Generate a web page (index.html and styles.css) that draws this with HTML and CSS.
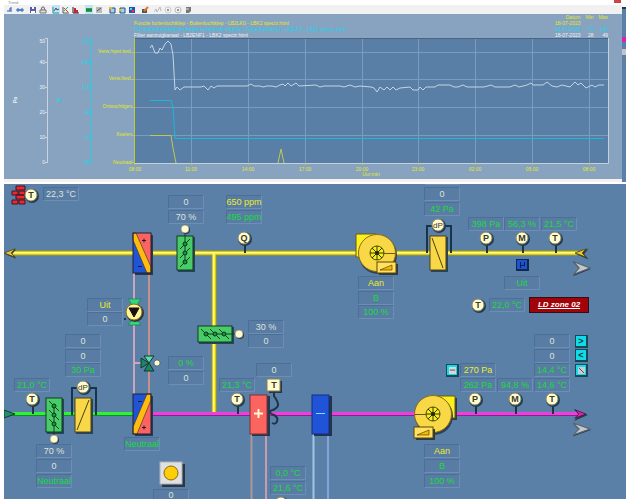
FILE: index.html
```html
<!DOCTYPE html>
<html lang="nl">
<head>
<meta charset="utf-8">
<title>LBK2</title>
<link rel="stylesheet" href="styles.css">
</head>
<body>
<section class="trend-row">
  <div class="trend">
    <header class="titlebar"><span>Trend</span><button class="close" aria-label="Sluiten"></button></header>
    <div class="toolbar">
      <button aria-label="Begin"><svg viewBox="0 0 8 8"><path d="M1 5h3V2M5 1v5" stroke="#2458b8"/></svg></button>
      <button aria-label="Zoeken"><svg viewBox="0 0 8 8"><path d="M1 5V3h2v2zM5 5V3h2v2zM3 4h2" stroke="#2458b8"/></svg></button>
      <button class="gap" aria-label="Opslaan"><svg viewBox="0 0 8 8"><path d="M1 1h6v6H1z" fill="#5560a8"/><path d="M3 1h2v2H3zM2 5h4v2H2z" fill="#fff"/></svg></button>
      <button aria-label="Afdrukken"><svg viewBox="0 0 8 8"><path d="M1 4h6v3H1zM2 4l1-3h2l1 3" stroke="#777" fill="#ddd"/></svg></button>
      <button class="gap on" aria-label="Grafiek"><svg viewBox="0 0 8 8"><path d="M1 1v6h6" stroke="#1c9c9c"/><path d="M2 5l2-3 1 2 2-1" stroke="#448"/></svg></button>
      <button aria-label="Lijnen"><svg viewBox="0 0 8 8"><path d="M1 1v6h6" stroke="#555"/><path d="M2 2l4 4" stroke="#d33"/><path d="M2 5l4-4" stroke="#2a4"/></svg></button>
      <button aria-label="Staven"><svg viewBox="0 0 8 8"><path d="M1 1v6h6" stroke="#224"/><path d="M3 7V2M5 7V4" stroke="#c23" stroke-width="2"/></svg></button>
      <button class="gap on" aria-label="Tabel"><svg viewBox="0 0 8 8"><path d="M1 2h6v4H1z" fill="#27a747"/><path d="M1 4h6" stroke="#165"/></svg></button>
      <button aria-label="Raster"><svg viewBox="0 0 8 8"><path d="M1 1h6v6H1z" fill="#bbb"/><path d="M2 5l4-3" stroke="#555"/></svg></button>
      <button class="gap" aria-label="Periode"><svg viewBox="0 0 8 8"><path d="M2 2h5v5H2z" fill="#9cd4f4" stroke="#347"/><path d="M1 1h3v2H1z" fill="#e8b830"/></svg></button>
      <button aria-label="Verschuiven"><svg viewBox="0 0 8 8"><path d="M2 2h5v5H2z" fill="#9cd4f4" stroke="#258"/><path d="M1 4h3" stroke="#e8b830" stroke-width="2"/></svg></button>
      <button aria-label="Kleuren"><svg viewBox="0 0 8 8"><path d="M1 1h6v6H1z" fill="#2a50b0"/><path d="M2 2h2v2H2z" fill="#4de"/><path d="M4 4h2v2H4z" fill="#e33"/></svg></button>
      <button class="gap" aria-label="Bewerken"><svg viewBox="0 0 8 8"><path d="M1 3h5v4H1z" fill="#555"/><path d="M3 5l4-4" stroke="#d73" stroke-width="2"/></svg></button>
      <button class="gap" aria-label="Volgen"><svg viewBox="0 0 8 8"><path d="M0 6l2-3 1 3 3-5 1 4" stroke="#bbb"/></svg></button>
      <button aria-label="Omhoog"><svg viewBox="0 0 8 8"><circle cx="4" cy="4" r="3" stroke="#ccc"/><path d="M3 4h2" stroke="#444"/></svg></button>
      <button aria-label="Omlaag"><svg viewBox="0 0 8 8"><circle cx="4" cy="4" r="3" stroke="#bbb"/><path d="M3 4h2" stroke="#444"/></svg></button>
      <button aria-label="Export"><svg viewBox="0 0 8 8"><path d="M2 1h5v4L5 7H2z" fill="#777"/><path d="M2 3h3" stroke="#ddd"/></svg></button>
    </div>
    <div class="legend">
      <ul>
        <li class="c-yellow">Functie buitenluchtklep - Buitenluchtklep - LB2LK0 - LBK2 speciz.html</li>
        <li class="c-cyan">PID buitenluchtklep als hoger berekende waarde - Buitenluchtklep - LB2LK0 - LBK2 speciz.html</li>
        <li class="c-white">Filter aanzuigkanaal - LB2ENF1 - LBK2 speciz.html</li>
      </ul>
      <table>
        <tr class="c-yellow"><th>Datum</th><th>Min</th><th>Max</th></tr>
        <tr class="c-yellow"><td>18-07-2023</td><td></td><td></td></tr>
        <tr class="c-cyan"><td>18-07-2023</td><td>70</td><td>100</td></tr>
        <tr class="c-white"><td>18-07-2023</td><td>28</td><td>49</td></tr>
      </table>
    </div>
    <svg class="chart" viewBox="4 38 618 141">
      <rect x="135" y="38" width="473" height="125" fill="#5a7fa7"/>
      <path class="grid" d="M191.500 38V163M248.500 38V163M305.500 38V163M362.500 38V163M418.500 38V163M475.500 38V163M532.500 38V163M589.500 38V163M135 52.500H608M135 79.500H608M135 107.500H608M135 135.500H608"/>
      <path d="M135 38.500H608" stroke="#4c6480"/>
      <path d="M135 163.500H608.500V38" stroke="#c4d0dc" fill="none"/>
      <path d="M134.500 38V165M132 52.500h3M132 79.500h3M132 107.500h3M132 135.500h3M132 162.500h3M191.500 163v2M248.500 163v2M305.500 163v2M362.500 163v2M418.500 163v2M475.500 163v2M532.500 163v2M589.500 163v2" stroke="#c6cc2c"/>
      <path d="M47.500 38V163M45 38.500h3M45 62.500h3M45 87.500h3M45 112.500h3M45 137.500h3M45 162.500h3" stroke="#c8d4e0"/>
      <path d="M91.500 38V163M89 38.500h3M89 62.500h3M89 87.500h3M89 112.500h3M89 137.500h3M89 162.500h3" stroke="#30c8dc"/>
      <g class="tick end c-white"><text x="45" y="43">50</text><text x="45" y="64">40</text><text x="45" y="89">30</text><text x="45" y="114">20</text><text x="45" y="139">10</text><text x="45" y="164">0</text></g>
      <g class="tick end c-cyan"><text x="90" y="43">150</text><text x="90" y="64">130</text><text x="90" y="89">110</text><text x="90" y="114">90</text><text x="90" y="139">70</text><text x="90" y="164">50</text></g>
      <g class="tick end c-yellow"><text x="132" y="53">Verw./spei.bed.</text><text x="132" y="80">Verw./bed.</text><text x="132" y="108">Ontvochtigen</text><text x="132" y="136">Koelen</text><text x="132" y="164">Neutraal</text></g>
      <g class="tick mid c-yellow"><text x="135" y="171">08:00</text><text x="191" y="171">11:00</text><text x="248" y="171">14:00</text><text x="305" y="171">17:00</text><text x="362" y="171">20:00</text><text x="418" y="171">23:00</text><text x="475" y="171">02:00</text><text x="532" y="171">05:00</text><text x="589" y="171">08:00</text><text x="371" y="176">Uur:min</text></g>
      <text class="unit c-white" transform="translate(17 100) rotate(-90)">Pa</text>
      <text class="unit c-cyan" transform="translate(61 100) rotate(-90)">%</text>
      <polyline class="series" stroke="#c4d4e4" points="150,48 152,45 155,53 158,53 160,48 162,50 165,44 168,41 171,44 173,55 175,90 177,87 180,90 184,87 201,87 204,86 208,90 211,86 214,88 217,86 247,86 251,84 254,86 260,86 263,87 267,86 272,86 276,87 280,85 283,84 285,86 288,83 291,86 296,83 299,86 316,85 320,87 324,86 340,86 344,87 350,85 355,87 360,86 371,87 374,88 377,92 380,87 384,90 387,87 390,90 393,87 396,90 400,88 410,87 413,90 418,90 420,87 423,90 426,87 435,87 438,85 450,85 454,87 458,87 463,85 467,87 484,87 491,85 495,87 510,87 515,85 519,87 527,85 531,83 533,85 543,85 547,82 552,86 557,87 562,85 570,87 575,82 578,85 581,83 586,88 592,85 595,87 599,85 604,85"/>
      <polyline class="series" stroke="#1cb8d4" points="150,100.500 171,100.500 173,107 175,138.500 604,138.500"/>
      <polyline class="series" stroke="#c0c84c" points="150,135.500 171,135.500 173,148 176,163"/>
      <polyline class="series" stroke="#c0c84c" points="278,163 281,149 284,163"/>
    </svg>
  </div>
  <div class="behind"><i class="pipe-end"></i><i class="arrow-end"></i></div>
</section>

<main class="plant">
<svg viewBox="4 184 622 315">
  <defs>
    <g id="box"><rect x="-17.500" y="-6.500" width="35" height="13" fill="#587ca4"/><path d="M-17.500 6.500V-6.500H17.500" stroke="#4c6f97" fill="none"/><path d="M-17.500 6.500H17.500V-6.500" stroke="#6d8fb4" fill="none"/></g>
    <g id="ball"><circle cx="1" cy="1" r="7" fill="#223a50"/><circle r="6" fill="#fffbd0" stroke="#8a8a68"/></g>
    <g id="sensor"><path d="M1 6V15" stroke="#1d3348" stroke-width="2"/><use href="#ball"/></g>
    <g id="knob"><circle cx="1" cy="1" r="4" fill="#223a50"/><circle r="4" fill="#fffbd0" stroke="#77775c" stroke-width=".6"/></g>
    <g id="damper"><rect x="-8" y="-17" width="16" height="34" fill="#48cc68" stroke="#123c1c"/><path d="M0-20V10M-5-4L5-14M-5 5L5-5M-5 14L5 4" stroke="#143c20"/><g fill="#1d9440" stroke="#0c3418"><circle cy="-9" r="2"/><circle r="2"/><circle cy="9" r="2"/></g></g>
    <g id="filter"><path d="M-11 0V-27H13V0" fill="none" stroke="#18344c" stroke-width="2"/><rect x="-7" y="-16" width="17" height="35" fill="#28435c"/><rect x="-8" y="-17" width="16" height="34" fill="#f8d848" stroke="#4c4010"/></g>
    <g id="rotor"><circle cx="1" cy="2" r="19" fill="#2b4258"/><circle r="18.500" fill="#f9d848" stroke="#8c6c10"/><circle r="7" fill="#f4ee20" stroke="#4c4800"/><path d="M0-7V7M-7 0H7M-5-5L5 5M5-5L-5 5" stroke="#383400"/><circle r="2" fill="#252500"/></g>
    <g id="drive"><rect x="2" y="2" width="19" height="11" fill="#2b3848"/><rect width="19" height="11" fill="#ffe060" stroke="#5c4800"/><path d="M3 8H15V3z" fill="#f8b800" stroke="#5c4000" stroke-width=".7"/></g>
    <path id="dart" d="M0 0L-14-6L-9 0L-14 6z"/>
  </defs>
  <rect x="4" y="184" width="622" height="315" fill="#5b80a8"/>

  <!-- ducts -->
  <g fill="none"><path d="M12 253H578M214 253V412" stroke="#a79b12" stroke-width="5"/><path d="M12 253H578M214 253V412" stroke="#fff02c" stroke-width="3"/><path d="M12 252.500H578M213.500 253V412" stroke="#fff99c"/>
  <path d="M10 414H133" stroke="#138c24" stroke-width="4"/><path d="M10 413.500H133" stroke="#30f03c" stroke-width="3"/>
  <path d="M151 414H578" stroke="#8c208c" stroke-width="4"/><path d="M151 413.500H578" stroke="#ec40dc" stroke-width="3"/></g>
  <use href="#dart" transform="translate(5 254) scale(-.8 .8)" fill="#273a40"/><use href="#dart" transform="translate(4 253) scale(-.8 .7)" fill="#e8c840" stroke="#403c10"/>
  <use href="#dart" transform="translate(576 254) scale(-.9 .9)" fill="#273a40"/><use href="#dart" transform="translate(575 253) scale(-.8 .7)" fill="#f8cc28" stroke="#403c10"/>
  <use href="#dart" transform="translate(591 269) scale(1.300 1.200)" fill="#263c50"/><use href="#dart" transform="translate(590 268) scale(1.200 1.100)" fill="#c4c8cc" stroke="#59646c"/>
  <use href="#dart" transform="translate(591 430) scale(1.300 1.100)" fill="#263c50"/><use href="#dart" transform="translate(590 429) scale(1.200 1)" fill="#c4c8cc" stroke="#59646c"/>
  <use href="#dart" transform="translate(588 415)" fill="#263c50"/><use href="#dart" transform="translate(586 414) scale(.8 .7)" fill="#e020a8" stroke="#481040"/>
  <path d="M4 410L15 414L4 418z" fill="#229068" stroke="#123c30"/>

  <!-- water piping -->
  <path d="M134 273V394M134 363H142" stroke="#c9a4bc" stroke-width="2" fill="none"/><path d="M149 273V394" stroke="#c89088" stroke-width="2"/>
  <path d="M251.500 434V499" stroke="#ae9698" stroke-width="2"/><path d="M266 434V499" stroke="#c89cac" stroke-width="2"/>
  <path d="M313.500 434V499" stroke="#a4c4e4" stroke-width="2"/><path d="M328 434V499" stroke="#84a4d8" stroke-width="2"/>

  <!-- heat recovery coils -->
  <rect x="135" y="235" width="18" height="40" fill="#2a3950"/><path d="M133 233H151V273z" fill="#fc6464"/><path d="M133 233V273H151z" fill="#2054d8"/><path d="M133 233H136L151 267V273H147L133 240z" fill="#ffbc10" stroke="#4c3820" stroke-width=".7"/><rect x="133" y="233" width="18" height="40" fill="none" stroke="#202030"/><path d="M142 240.500h4M144 238.500v4M138 266.500h4" stroke="#281828"/>
  <rect x="135" y="396" width="18" height="40" fill="#2a3950"/><path d="M133 394H151L133 434z" fill="#2054d8"/><path d="M151 394V434H133z" fill="#fc6464"/><path d="M151 394H147L133 427V434H137L151 400z" fill="#ffbc10" stroke="#4c3820" stroke-width=".7"/><rect x="133" y="394" width="18" height="40" fill="none" stroke="#202030"/><path d="M142 427.500h4M144 425.500v4M138 401.500h4" stroke="#281828"/>

  <!-- dampers -->
  <path d="M178 237h17v35h-17zM47 399h17v35H47zM199 327h35v17h-35z" fill="#28435c"/>
  <use href="#damper" x="185" y="253"/><use href="#knob" x="185" y="229"/>
  <use href="#damper" transform="translate(54 415) scale(1 -1)"/><use href="#knob" x="54" y="439"/>
  <use href="#damper" transform="translate(215 334) rotate(90)"/><use href="#knob" x="239" y="334"/>

  <!-- filters -->
  <use href="#filter" x="438" y="253"/><path d="M432 238L443 268" stroke="#4c4010"/><use href="#ball" x="438" y="225"/>
  <use href="#filter" x="83" y="415"/><path d="M77 430L89 400" stroke="#4c4010"/><use href="#ball" x="83" y="387"/>

  <!-- fans -->
  <path d="M356 234H376V257H356z" fill="#fcf020" stroke="#665c08"/><use href="#rotor" x="377" y="253"/><path d="M384 253.500H395" stroke="#6c5810"/><use href="#drive" x="377" y="262"/>
  <path d="M438 398H457V420H438z" fill="#2b3c50"/><path d="M436 396H455V418H436z" fill="#fcf020" stroke="#665c08"/><use href="#rotor" x="433" y="414"/><path d="M415 414.500H426" stroke="#6c5810"/><use href="#drive" x="414" y="427"/>

  <!-- heater and cooler -->
  <rect x="252" y="396" width="18" height="40" fill="#28384c"/><rect x="250" y="395" width="17" height="39" fill="#fc6460" stroke="#783038"/><path d="M254 413.500h9M258.500 409v9" stroke="#fff8d0" stroke-width="2"/>
  <rect x="314" y="396" width="18" height="40" fill="#20344c"/><rect x="312" y="395" width="17" height="39" fill="#2054d8" stroke="#182c78"/><path d="M316 413.500h9" stroke="#8cd8f8"/>
  <path d="M274 391V396C279 403 280 407 273 410C268 411 270 414 274 415C280 418 277 426 272 423" fill="none" stroke="#1c3448" stroke-width="2"/>
  <rect x="269" y="381" width="13" height="12" fill="#243848"/><rect x="267" y="379" width="13" height="12" fill="#fffbd0" stroke="#8a8048"/>

  <!-- pump and mixing valve -->
  <path d="M128 299h13l-3 4v3h-7v-3zM128 325h13l-3-4v-3h-7v3z" fill="#30d878" stroke="#1c7048" stroke-width=".6"/><circle cx="135" cy="313" r="9" fill="#2b3440"/><circle cx="134" cy="312" r="8" fill="#fff49c" stroke="#8c7410"/><path d="M129 308H139L134 317z" fill="#181010" stroke="#181010"/><circle cx="125" cy="319" r="1" fill="#102030"/>
  <path d="M149 363L144 356H154z" fill="#60d8b0" stroke="#103830"/><path d="M149 363L144 371H154zM149 363L141 358V368z" fill="#188864" stroke="#103830"/><circle cx="157" cy="363" r="3" fill="#fffbd0" stroke="#344048" stroke-width=".6"/>

  <!-- outdoor wall -->
  <path d="M16 186h9v4h-9zM12 191h6v4h-6zM19 191h6v4h-6zM16 195h9v4h-9zM12 200h6v4h-6zM19 200h6v4h-6z" fill="#f42430" stroke="#381820"/>

  <!-- lamp -->
  <rect x="162" y="464" width="23" height="23" fill="#283848"/><rect x="160" y="462" width="22" height="22" fill="#e0e0e4" stroke="#b0b0b4"/><circle cx="171" cy="473" r="7" fill="#ffcc08" stroke="#866c10"/>

  <!-- humidifier status -->
  <rect x="516" y="259" width="13" height="12" fill="#14284c"/><rect x="517" y="260" width="10" height="9" fill="#1c54d0"/><path d="M520.500 262V268M524.500 262V266M520 265.500H524" stroke="#0c1c50"/>

  <!-- sensors -->
  <g><use href="#sensor" x="244" y="238"/><use href="#sensor" x="486" y="238"/><use href="#sensor" x="522" y="238"/><use href="#sensor" x="555" y="238"/><use href="#sensor" x="32" y="399"/><use href="#sensor" x="237" y="399"/><use href="#sensor" x="475" y="399"/><use href="#sensor" x="515" y="399"/><use href="#sensor" x="552" y="399"/><use href="#ball" x="31" y="195"/><use href="#ball" x="478" y="305"/><use href="#ball" x="281" y="503"/></g>
  <g class="tag"><text x="244" y="241">Q</text><text x="486" y="241">P</text><text x="522" y="241">M</text><text x="555" y="241">T</text><text x="32" y="402">T</text><text x="237" y="402">T</text><text x="475" y="402">P</text><text x="515" y="402">M</text><text x="552" y="402">T</text><text x="31" y="198">T</text><text x="478" y="308">T</text><text x="274" y="388">T</text><text class="thin" x="438" y="228">dP</text><text class="thin" x="83" y="390">dP</text></g>

  <!-- readouts -->
  <g>
    <use href="#box" x="61" y="194"/><use href="#box" x="186" y="202"/><use href="#box" x="186" y="217"/><use href="#box" x="244" y="202"/><use href="#box" x="244" y="217"/><use href="#box" x="105" y="305"/><use href="#box" x="105" y="319"/><use href="#box" x="266" y="327"/><use href="#box" x="266" y="341"/>
    <use href="#box" x="442" y="178"/><use href="#box" x="442" y="194"/><use href="#box" x="442" y="209"/><use href="#box" x="376" y="283"/><use href="#box" x="376" y="298"/><use href="#box" x="376" y="312"/><use href="#box" x="486" y="224"/><use href="#box" x="522" y="224"/><use href="#box" x="559" y="224"/><use href="#box" x="522" y="283"/><use href="#box" x="507" y="305"/>
    <use href="#box" x="83" y="341"/><use href="#box" x="83" y="356"/><use href="#box" x="83" y="370"/><use href="#box" x="32" y="385"/><use href="#box" x="54" y="451"/><use href="#box" x="54" y="466"/><use href="#box" x="54" y="481"/><use href="#box" x="142" y="444"/><use href="#box" x="171" y="496"/>
    <use href="#box" x="186" y="363"/><use href="#box" x="186" y="378"/><use href="#box" x="237" y="385"/><use href="#box" x="274" y="370"/><use href="#box" x="288" y="473"/><use href="#box" x="288" y="488"/>
    <use href="#box" x="552" y="341"/><use href="#box" x="552" y="356"/><use href="#box" x="552" y="370"/><use href="#box" x="552" y="385"/><use href="#box" x="515" y="385"/><use href="#box" x="478" y="385"/><use href="#box" x="478" y="370"/><use href="#box" x="442" y="451"/><use href="#box" x="442" y="466"/><use href="#box" x="442" y="481"/>
  </g>
  <g class="val set"><text x="61" y="197">22,3 °C</text><text x="186" y="205">0</text><text x="186" y="220">70 %</text><text x="105" y="322">0</text><text x="266" y="330">30 %</text><text x="266" y="344">0</text><text x="442" y="197">0</text><text x="83" y="344">0</text><text x="83" y="359">0</text><text x="54" y="454">70 %</text><text x="54" y="469">0</text><text x="171" y="498">0</text><text x="186" y="381">0</text><text x="274" y="373">0</text><text x="552" y="344">0</text><text x="552" y="359">0</text></g>
  <g class="val warn"><text x="244" y="205">650 ppm</text><text x="105" y="308">Uit</text><text x="376" y="286">Aan</text><text x="442" y="454">Aan</text><text x="478" y="373">270 Pa</text></g>
  <g class="val live"><text x="244" y="220">495 ppm</text><text x="442" y="212">42 Pa</text><text x="376" y="301">B</text><text x="376" y="315">100 %</text><text x="486" y="227">398 Pa</text><text x="522" y="227">56,3 %</text><text x="559" y="227">21,5 °C</text><text x="522" y="286">Uit</text><text x="507" y="308">22,0 °C</text><text x="83" y="373">30 Pa</text><text x="32" y="388">21,0 °C</text><text x="54" y="484">Neutraal</text><text x="142" y="447">Neutraal</text><text x="186" y="366">0 %</text><text x="237" y="388">21,3 °C</text><text x="288" y="476">0,0 °C</text><text x="288" y="491">21,6 °C</text><text x="552" y="373">14,4 °C</text><text x="552" y="388">14,6 °C</text><text x="515" y="388">94,8 %</text><text x="478" y="388">262 Pa</text><text x="442" y="469">B</text><text x="442" y="484">100 %</text></g>

  <!-- controls -->
  <foreignObject x="529" y="297" width="60" height="16"><a class="zone" href="#zone02">LD zone 02</a></foreignObject>
  <foreignObject x="575" y="335" width="14" height="14"><button class="key">&gt;</button></foreignObject>
  <foreignObject x="575" y="349" width="14" height="14"><button class="key">&lt;</button></foreignObject>
  <foreignObject x="575" y="364" width="14" height="14"><button class="key" aria-label="Stooklijn"><svg viewBox="0 0 8 8"><path d="M0 0h8v8H0z" fill="#c8ccd0"/><path d="M1 1l6 6" stroke="#384858"/></svg></button></foreignObject>
  <foreignObject x="446" y="364" width="14" height="14"><button class="key" aria-label="Instelling"><svg viewBox="0 0 8 8"><path d="M0 0h8v8H0z" fill="#d4d8dc"/><path d="M1 3.500h6" stroke="#384858"/></svg></button></foreignObject>
</svg>
</main>
</body>
</html>
```

FILE: styles.css
```css
* { box-sizing: border-box; }

body {
  margin: 0;
  background: #fff;
  font-family: "Liberation Sans", Arial, sans-serif;
}

svg { display: block; }
button { padding: 0; border: 0; background: none; font: inherit; }

.trend-row { display: flex; padding-left: 4px; }
.trend { flex: 1; min-width: 0; border-bottom: 3px solid #f4f1ef; margin-bottom: 2px; }

.titlebar {
  display: flex;
  justify-content: space-between;
  align-items: flex-start;
  height: 5px;
  padding-left: 4px;
  font-size: 4px;
  line-height: 5px;
  color: #888;
}
.close { width: 7px; height: 3px; margin-right: 1px; background: #cc4444; }

.toolbar { display: flex; gap: 2px; height: 9px; padding-left: 2px; background: #f1f1f1; }
.toolbar button { width: 8px; height: 9px; }
.toolbar .gap { margin-left: 3px; }
.toolbar .on { background: #c4e4f0; }
.toolbar svg { width: 8px; height: 8px; fill: none; }

.legend {
  display: flex;
  justify-content: space-between;
  align-items: flex-end;
  height: 24px;
  padding: 0 14px 0 130px;
  background: #87a3c0;
  font-size: 5px;
  line-height: 6px;
}
.legend ul { margin: 0; padding: 0; list-style: none; white-space: nowrap; }
.legend table { border-collapse: collapse; }
.legend th, .legend td { padding: 0 0 0 5px; font-weight: normal; text-align: right; line-height: 6px; }

.c-yellow { color: #e4e820; fill: #e4e820; }
.c-cyan { color: #10d8ee; fill: #10d8ee; }
.c-white { color: #eef2f6; fill: #eef2f6; }

.chart { width: 100%; height: auto; background: #87a3c0; }
.grid { stroke: #7c9cbf; fill: none; }
.tick { font-size: 5px; }
.end { text-anchor: end; }
.mid { text-anchor: middle; }
.unit { font-size: 5px; font-weight: bold; text-anchor: middle; }
.series { fill: none; stroke-width: 1; }

.behind {
  display: flex;
  flex-direction: column;
  gap: 7px;
  width: 4px;
  margin: 7px 0 2px;
  padding-top: 28px;
  border-top: 2px solid #26384c;
  background: #5b80a8;
}
.pipe-end { height: 5px; background: #dc20b0; }
.arrow-end { height: 6px; background: #c4c4c8; }

.plant { padding-left: 4px; }
.plant > svg { width: 100%; height: auto; }

.tag { font-size: 9px; font-weight: bold; text-anchor: middle; fill: #3a3828; }
.thin { font-size: 8px; font-weight: normal; }
.val { font-size: 9px; text-anchor: middle; }
.set { fill: #dfe5d8; }
.warn { fill: #ecec28; }
.live { fill: #18dc3c; }

.zone {
  display: block;
  height: 16px;
  border: 1px solid #301018;
  background: #a00408;
  color: #fff;
  font-size: 8px;
  font-style: italic;
  font-weight: bold;
  line-height: 14px;
  text-align: center;
}
.key {
  display: grid;
  place-items: center;
  width: 13px;
  height: 13px;
  border: 1px solid #184858;
  border-width: 1px 2px 2px 1px;
  background: #10dce8;
  color: #103040;
  font-size: 9px;
  font-weight: bold;
  line-height: 9px;
}
.key svg { width: 7px; height: 7px; }
```
